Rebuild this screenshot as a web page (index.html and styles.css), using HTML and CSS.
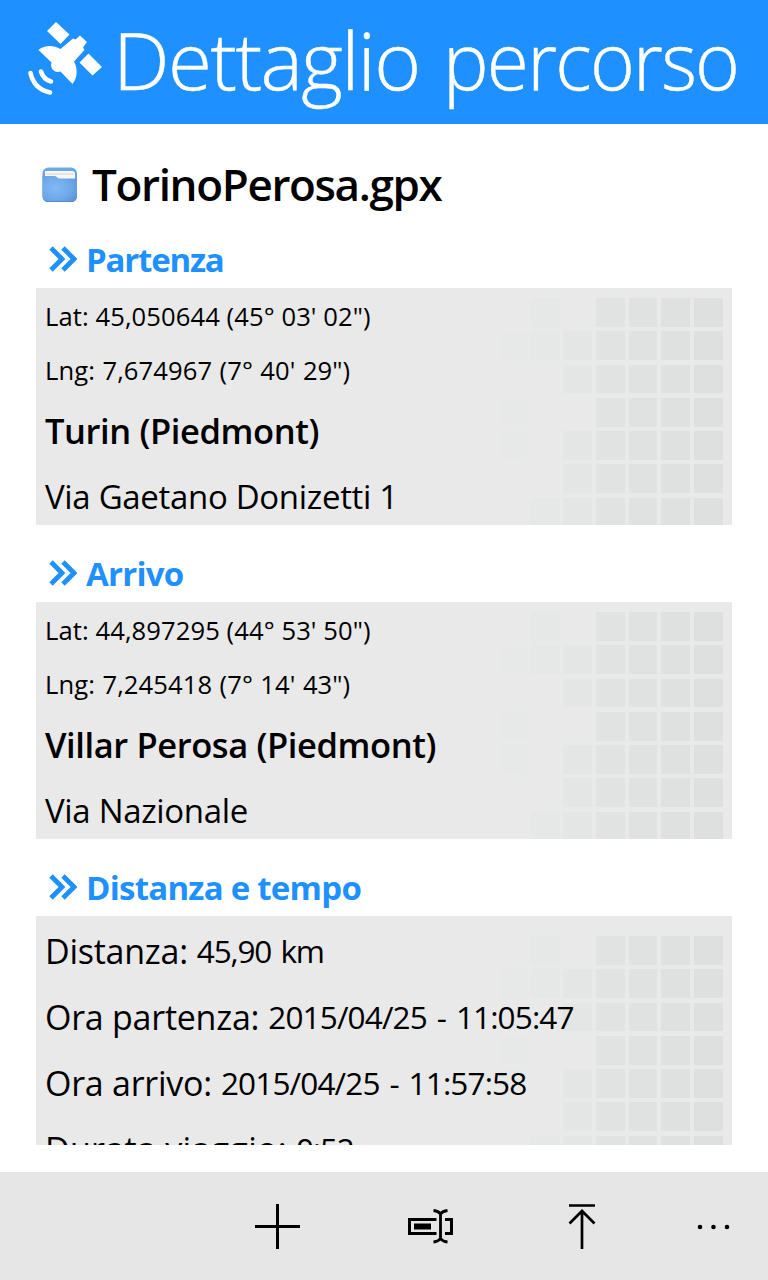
FILE: index.html
```html
<!DOCTYPE html>
<html lang="it">
<head>
<meta charset="utf-8">
<title>Dettaglio percorso</title>
<link rel="stylesheet" href="styles.css">
</head>
<body>
<svg width="0" height="0" class="defs">
  <defs>
    <symbol id="chev" viewBox="0 0 28 26"><path d="M2 2 13 13 2 24M14 2 25 13 14 24" fill="none" stroke="#1e90ff" stroke-width="4.8"/></symbol>
    <g id="mosaic">
      <g fill="#e6e8e7"><path d="M11 34h26v28H11zM11 100h26v28H11zM11 133h26v28H11z" opacity=".6"/><path d="M41 0h29v29H41zM41 33h29v29H41zM41 200h29v29H41z"/></g>
      <path fill="#e4e6e5" d="M73 33h29v29H73zM73 67h29v28H73zM73 133h29v29H73zM73 166h29v29H73zM73 200h29v29H73z"/>
      <path fill="#e1e3e2" d="M106 0h29v29h-29zM106 33h29v29h-29zM106 67h29v28h-29zM106 100h29v29h-29zM106 133h29v29h-29zM106 166h29v29h-29zM106 200h29v29h-29z"/>
      <path fill="#e0e2e1" d="M139 0h28v29h-28zM139 33h28v29h-28zM139 67h28v28h-28zM139 100h28v29h-28zM139 133h28v29h-28zM139 166h28v29h-28zM139 200h28v29h-28z"/>
      <path fill="#dfe1e1" d="M171 0h29v29h-29zM171 33h29v29h-29zM171 67h29v28h-29zM171 100h29v29h-29zM171 133h29v29h-29zM171 166h29v29h-29zM171 200h29v29h-29z"/>
      <path fill="#dee0df" d="M204 0h29v29h-29zM204 33h29v29h-29zM204 67h29v28h-29zM204 100h29v29h-29zM204 133h29v29h-29zM204 166h29v29h-29zM204 200h29v29h-29z"/>
    </g>
    <linearGradient id="sheet" x1="0" y1="0" x2="0" y2="1"><stop offset="0" stop-color="#6fa9e8"/><stop offset="1" stop-color="#4f88cc"/></linearGradient>
    <radialGradient id="front" cx=".38" cy=".45" r=".75"><stop offset="0" stop-color="#82b9f6"/><stop offset=".6" stop-color="#6da8e8"/><stop offset="1" stop-color="#5a93d6"/></radialGradient>
  </defs>
</svg>
<header class="header">
  <svg class="satellite" width="78" height="80" viewBox="26 18 78 80" fill="#fff">
    <path d="M56 22 69.500 34.500 60.500 44 47 31zM88.500 53.500 102 67 92.500 75.500 79.500 62.500z"/>
    <path d="M38.500 50C44 45 53 44.500 60.500 49L73 38.500 75.500 39.500 80 35.500 87 42 83 47.500 84.500 50 74 61.500C78 69 77.500 78 72.500 84L60.500 71.500C55 73.500 49.500 68.500 51.500 62.500z"/>
    <path d="M30.500 73Q34 89 50 92.500M41 71.500Q43.500 79.500 51 81.500" fill="none" stroke="#fff" stroke-width="4.600" stroke-linecap="round"/>
  </svg>
  <h1 class="title"><span class="word-a">Dettaglio</span> <span class="word-b">percorso</span></h1>
</header>
<main class="content">
  <div class="file">
    <svg class="folder" width="36" height="36" viewBox="0 0 36 36">
      <rect x=".5" y=".5" width="34.500" height="34.500" rx="6" fill="url(#sheet)"/>
      <path d="M3 4h27q3 0 3 3v7H3z" fill="#f7f7f5"/><path d="M4 7h28" stroke="#cfd2d4"/>
      <path d="M.5 9H12q2 0 3 1.200t3 1.300h14q3 0 3 3V29q0 6-6 6H6.500q-6 0-6-6z" fill="url(#front)"/>
      <path d="M4 34.500h27" stroke="#4d80bb" stroke-opacity=".6"/>
    </svg>
    <h2 class="filename">TorinoPerosa.gpx</h2>
  </div>
  <section class="section">
    <h3 class="heading"><svg class="chev"><use href="#chev"/></svg><span class="partenza">Partenza</span></h3>
    <div class="card">
      <svg class="mosaic"><use href="#mosaic"/></svg>
      <p class="coord">Lat: 45,050644 (45° 03' 02")</p>
      <p class="coord lng">Lng: 7,674967 (7° 40' 29")</p>
      <p class="city">Turin (Piedmont)</p>
      <p class="street">Via Gaetano Donizetti 1</p>
    </div>
  </section>
  <section class="section">
    <h3 class="heading"><svg class="chev"><use href="#chev"/></svg><span class="arrivo">Arrivo</span></h3>
    <div class="card">
      <svg class="mosaic"><use href="#mosaic"/></svg>
      <p class="coord">Lat: 44,897295 (44° 53' 50")</p>
      <p class="coord lng">Lng: 7,245418 (7° 14' 43")</p>
      <p class="city">Villar Perosa (Piedmont)</p>
      <p class="street">Via Nazionale</p>
    </div>
  </section>
  <section class="section">
    <h3 class="heading"><svg class="chev"><use href="#chev"/></svg><span class="distanza">Distanza e tempo</span></h3>
    <div class="card stats">
      <svg class="mosaic"><use href="#mosaic"/></svg>
      <p class="stat"><span class="label">Distanza:</span><span class="value distance">45,90 km</span></p>
      <p class="stat"><span class="label">Ora partenza:</span><span class="value">2015/04/25 - 11:05:47</span></p>
      <p class="stat"><span class="label">Ora arrivo:</span><span class="value">2015/04/25 - 11:57:58</span></p>
      <p class="stat"><span class="label duration">Durata viaggio:</span><span class="value distance">0:52</span></p>
    </div>
  </section>
</main>
<footer class="appbar">
  <svg width="46" height="46" viewBox="0 0 46 46" class="add"><path d="M0 22.500h45M22.500 0v45" stroke="#000" stroke-width="3" fill="none"/></svg>
  <svg width="46" height="36" viewBox="0 0 46 36" class="rename"><g fill="none" stroke="#000" stroke-width="3"><path d="M28.500 11.500h-27v14h27M37 11.500h6.500v14H37"/><path d="M32.500 4v28M25.500 2.500q5 .5 7 3.500 2-3 7-3.500M25.500 34q5-.5 7-3.500 2 3 7 3.500" stroke-width="2.800"/></g><path d="M6 15.500h17v6H6z"/></svg>
  <svg width="28" height="46" viewBox="0 0 28 46" class="upload"><path d="M1 1.500h26M14 45V7M1.500 19.500 14 7l12.500 12.500" fill="none" stroke="#000" stroke-width="2.700"/></svg>
  <svg width="34" height="6" viewBox="0 0 34 6" class="more"><circle cx="3" cy="3" r="2.300"/><circle cx="16.500" cy="3" r="2.300"/><circle cx="30" cy="3" r="2.300"/></svg>
</footer>
</body>
</html>
```
FILE: styles.css
```css
* { box-sizing: border-box; }
body { margin: 0; width: 768px; height: 1280px; overflow: hidden; background: #fff; color: #000; font-family: "Open Sans", "Noto Sans", sans-serif; display: flex; flex-direction: column; }
h1, h2, h3, p { margin: 0; font-weight: 400; white-space: nowrap; }
svg { display: block; flex: none; }
.defs { position: absolute; }
.header { height: 124px; flex: none; background: #1e90ff; color: #fff; display: flex; padding: 18px 0 0 26px; }
.title { font-weight: 300; font-size: 80px; line-height: 82px; margin-left: 9px; display: flex; gap: 23px; -webkit-text-stroke: .5px #fff; }
.word-a { letter-spacing: -1.6px; }
.word-b { letter-spacing: -1.8px; transform: scaleX(.957); transform-origin: 0 0; width: 290px; }
.content { height: 1021px; flex: none; padding: 0 36px; overflow: hidden; }
.file { height: 108px; display: flex; padding: 43px 0 0 6px; }
.filename { font-size: 44px; line-height: 60px; font-weight: 600; margin: -13px 0 0 14px; letter-spacing: -1.35px; }
.section { height: 314px; }
.heading { height: 56px; padding: 14px 0 0 13px; display: flex; color: #1e90ff; font-size: 33px; line-height: 44px; font-weight: 700; }
.heading span { margin: -8px 0 0 9px; letter-spacing: -.75px; }
.heading .partenza { letter-spacing: -1.2px; }
.chev { width: 28px; height: 26px; }
.card { position: relative; height: 237px; background: #e9e9e9; padding: 1px 9px 0; overflow: hidden; }
.mosaic { position: absolute; left: 454px; top: 10px; width: 240px; height: 229px; }
.card p { position: relative; }
.coord { font-size: 25.6px; line-height: 56px; height: 54px; letter-spacing: .08px; }
.lng { word-spacing: .7px; }
.city { font-size: 34.5px; line-height: 68px; height: 66px; font-weight: 600; letter-spacing: -.4px; }
.street { font-size: 33px; line-height: 67px; letter-spacing: -.32px; }
.stats { height: 290px; }
.stats .mosaic { top: 20px; }
.stat { display: flex; height: 66px; line-height: 68px; font-size: 34px; }
.label { letter-spacing: -.25px; }
.duration { letter-spacing: .3px; }
.value { font-size: 31.5px; margin-left: 9px; letter-spacing: -.85px; word-spacing: 2.5px; }
.distance { letter-spacing: -1.2px; }
.appbar { height: 108px; margin-top: 27px; background: #e6e6e6; display: flex; padding: 32px 37px 0 255px; }
.rename { margin: 4px 0 0 107px; }
.upload { margin-left: 114px; }
.more { margin: 20px 0 0 101px; }
```
